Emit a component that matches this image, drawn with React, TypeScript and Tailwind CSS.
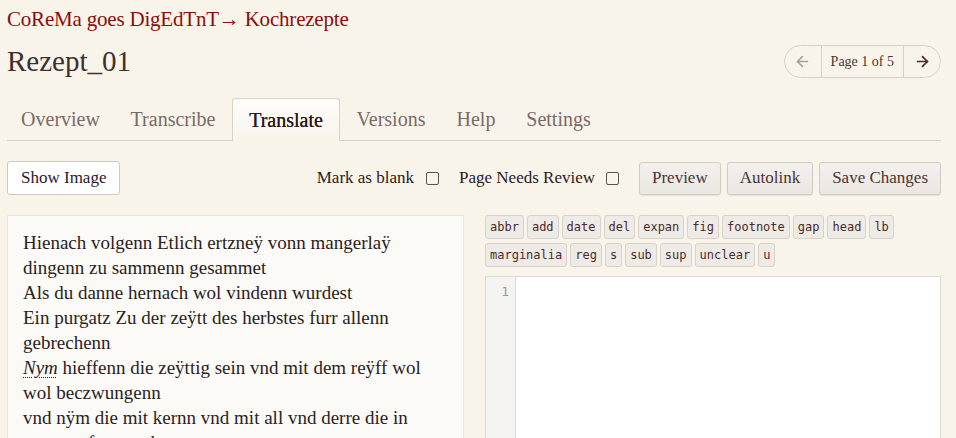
import { ArrowLeft, ArrowRight } from 'lucide-react';

const tabs = [
  { label: 'Overview', w: 'w-[107px]' },
  { label: 'Transcribe', w: 'w-[118px]' },
  { label: 'Translate', w: 'w-[108px]' },
  { label: 'Versions', w: 'w-[102px]' },
  { label: 'Help', w: 'w-[68px]' },
  { label: 'Settings', w: 'w-[97px]' },
];

const tags = [
  ['abbr', 'add', 'date', 'del', 'expan', 'fig', 'footnote', 'gap', 'head', 'lb'],
  ['marginalia', 'reg', 's', 'sub', 'sup', 'unclear', 'u'],
];

function Pager() {
  return (
    <div className="flex h-[33px] items-stretch rounded-full border border-[#d9d0c4] text-[14px]">
      <button className="flex w-[37px] items-center justify-center border-r border-[#d9d0c4] text-[#a89a96]">
        <ArrowLeft size={17} strokeWidth={2.2} />
      </button>
      <span className="flex items-center px-[9px] text-[#4a3434]">Page 1 of 5</span>
      <button className="flex w-[37px] items-center justify-center border-l border-[#d9d0c4] text-[#4a2a2a]">
        <ArrowRight size={17} strokeWidth={2.4} />
      </button>
    </div>
  );
}

function Tabs() {
  return (
    <div className="mt-[19px] flex h-[43px] items-end border-b border-[#d9d2c6]">
      {tabs.map((tab) => {
        const active = tab.label === 'Translate';
        return (
          <div
            key={tab.label}
            className={`flex h-[43px] items-center justify-center text-[20px] ${tab.w} ${
              active
                ? '-mb-px rounded-t-[3px] border border-b-0 border-[#d9d2c6] bg-gradient-to-b from-[#fefdfb] to-[#f8f4ea] text-[#2a1a1a] [text-shadow:0_0_0.4px_#2a1a1a]'
                : 'text-[#7a6a66]'
            }`}
          >
            {tab.label}
          </div>
        );
      })}
    </div>
  );
}

function Toolbar() {
  const btn =
    'h-[33px] rounded-[3px] border border-[#d3ccc4] bg-gradient-to-b from-[#f3f0ed] to-[#ebe6e2] px-[12px] text-[17px] text-[#4a3434] shadow-[0_1px_1px_rgba(0,0,0,0.08)]';
  return (
    <div className="mt-[20px] flex items-center">
      <button className="h-[34px] rounded-[3px] border border-[#cfc9c2] bg-white px-[13px] text-[17px] text-[#2a1a2a]">
        Show Image
      </button>
      <div className="ml-auto flex items-center text-[17px] text-[#2a1a1a]">
        <span>Mark as blank</span>
        <span className="ml-[12px] h-[13px] w-[13px] rounded-[2px] border border-[#555]" />
        <span className="ml-[20px]">Page Needs Review</span>
        <span className="ml-[11px] h-[13px] w-[13px] rounded-[2px] border border-[#555]" />
        <div className="ml-[20px] flex gap-[6px]">
          <button className={btn}>Preview</button>
          <button className={btn}>Autolink</button>
          <button className={btn}>Save Changes</button>
        </div>
      </div>
    </div>
  );
}

function TextPanel() {
  return (
    <div className="h-[230px] w-[457px] shrink-0 overflow-hidden border border-[#ece6db] bg-[#fcfaf6] pl-[15px] pr-[22px] pt-[14px] text-[19px] leading-[25px] text-[#2a1e22]">
      <p>Hienach volgenn Etlich ertzneÿ vonn mangerlaÿ dingenn zu sammenn gesammet</p>
      <p>Als du danne hernach wol vindenn wurdest</p>
      <p>Ein purgatz Zu der zeÿtt des herbstes furr allenn gebrechenn</p>
      <p>
        <span className="italic underline decoration-dotted decoration-1 underline-offset-[3px]">Nym</span>{' '}
        hieffenn die zeÿttig sein vnd mit dem reÿff wol wol beczwungenn
      </p>
      <p>vnd nÿm die mit kernn vnd mit all vnd derre die in eynem ofenn vnd</p>
    </div>
  );
}

function EditorPanel() {
  return (
    <div className="flex min-w-0 flex-1 flex-col">
      <div className="flex flex-col gap-[4px] font-['DejaVu_Sans_Mono',monospace] text-[12px] text-[#4a2a2a]">
        {tags.map((row, i) => (
          <div key={i} className="flex gap-[3px]">
            {row.map((t) => (
              <span
                key={t}
                className="flex h-[24px] items-center rounded-[3px] border border-[#d8d2cb] bg-[#eeeae6] px-[4px]"
              >
                {t}
              </span>
            ))}
          </div>
        ))}
      </div>
      <div className="mt-[9px] flex h-[170px] border border-[#dcdad6] bg-white">
        <div className="w-[30px] border-r border-[#dcdad6] bg-[#f5f4f2] pr-[6px] pt-[5px] text-right font-['DejaVu_Sans_Mono',monospace] text-[13px] text-[#999]">
          1
        </div>
        <div className="flex-1" />
      </div>
    </div>
  );
}

export default function App() {
  return (
    <div className="h-[438px] overflow-hidden bg-[#f8f4ea] pl-[7px] pr-[15px] font-['Liberation_Serif',serif]">
      <div className="pt-[7px] text-[21px] leading-[24px] tracking-[-0.2px] text-[#8b0d0d]">
        CoReMa goes DigEdTnT→ Kochrezepte
      </div>
      <div className="mt-[12px] flex h-[36px] items-center justify-between">
        <h1 className="text-[29px] leading-[36px] text-[#3c3030]">Rezept_01</h1>
        <Pager />
      </div>
      <Tabs />
      <Toolbar />
      <div className="mt-[20px] flex gap-[21px]">
        <TextPanel />
        <EditorPanel />
      </div>
    </div>
  );
}
